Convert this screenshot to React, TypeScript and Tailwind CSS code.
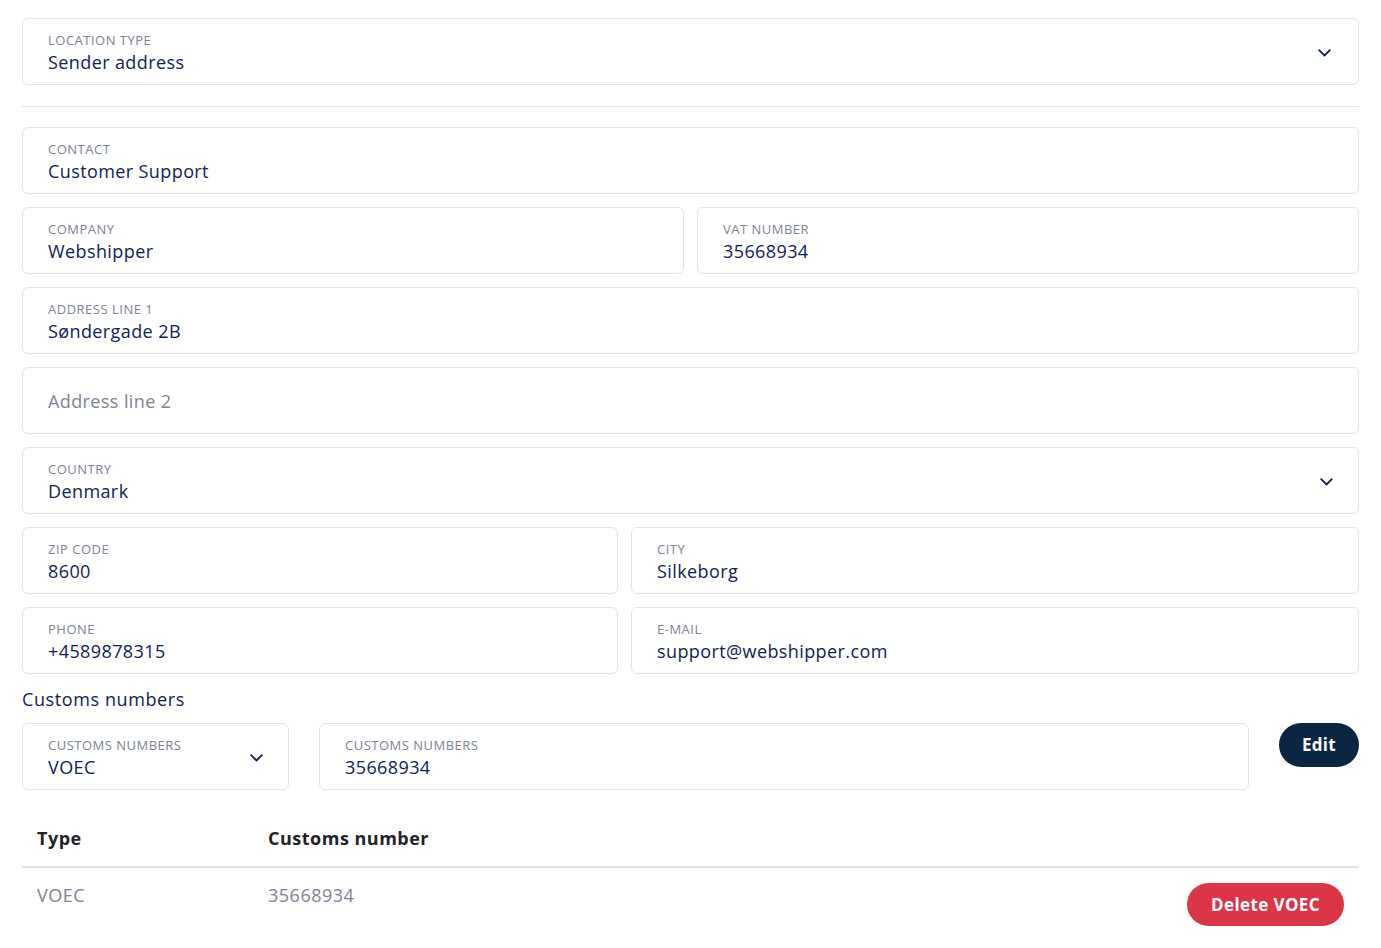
import React from "react";

const font = { fontFamily: '"Open Sans", "Noto Sans", sans-serif' };

function Chevron() {
  return (
    <svg width="13" height="8" viewBox="0 0 13 8" fill="none" className="shrink-0 mt-[3px]">
      <path d="M1.2 1.2 L6.5 6.5 L11.8 1.2" stroke="#0b2545" strokeWidth="1.8" strokeLinecap="round" strokeLinejoin="round" />
    </svg>
  );
}

function Field({ label, value, className = "", select = false, chevronPad = "pr-[26px]" }: { label: string; value: string; className?: string; select?: boolean; chevronPad?: string }) {
  return (
    <div className={`h-[67px] rounded-[6px] border border-[#e3e4e6] bg-white pl-[25px] flex items-center ${chevronPad} ${className}`}>
      <div className="flex-1 min-w-0 pt-[3px]">
        <div className="text-[13px] leading-[16px] uppercase text-[#7b8394] tracking-[0.5px]">{label}</div>
        <div className="text-[18px] leading-[24px] text-[#0e2158] mt-[2px] tracking-[0.4px]">{value}</div>
      </div>
      {select && <Chevron />}
    </div>
  );
}

export default function App() {
  return (
    <div style={font} className="bg-white min-h-[948px] w-[1381px] px-[22px] pt-[18px]">
      <Field label="Location type" value="Sender address" select chevronPad="pr-[27px]" />
      <div className="h-px bg-[#e3e4e6] mt-[21px] mb-[20px]" />
      <div className="flex flex-col gap-[13px]">
        <Field label="Contact" value="Customer Support" />
        <div className="flex gap-[13px]">
          <Field label="Company" value="Webshipper" className="flex-1" />
          <Field label="VAT number" value="35668934" className="flex-1" />
        </div>
        <Field label="Address line 1" value="Søndergade 2B" />
        <div className="h-[67px] rounded-[6px] border border-[#e3e4e6] bg-white pl-[25px] flex items-center">
          <span className="text-[18px] leading-[24px] text-[#7b8394] tracking-[0.4px]">Address line 2</span>
        </div>
        <Field label="Country" value="Denmark" select chevronPad="pr-[25px]" />
        <div className="flex gap-[13px]">
          <Field label="Zip code" value="8600" className="w-[596px]" />
          <Field label="City" value="Silkeborg" className="flex-1" />
        </div>
        <div className="flex gap-[13px]">
          <Field label="Phone" value="+4589878315" className="w-[596px]" />
          <Field label="E-mail" value="support@webshipper.com" className="flex-1" />
        </div>
      </div>
      <div className="text-[18px] leading-[24px] text-[#0e2158] mt-[13px] tracking-[0.6px]">Customs numbers</div>
      <div className="flex items-start mt-[12px]">
        <Field label="Customs numbers" value="VOEC" select className="w-[267px]" chevronPad="pr-[25px]" />
        <Field label="Customs numbers" value="35668934" className="flex-1 ml-[30px]" />
        <button className="ml-[30px] h-[44px] w-[80px] rounded-full bg-[#0b2545] text-white text-[17px] font-bold tracking-[0.3px]">Edit</button>
      </div>
      <div className="mt-[24px]">
        <div className="flex pt-[12px] pb-[16px] border-b-2 border-[#dfe2e6] text-[18px] leading-[24px] font-bold text-[#1f2229] tracking-[0.5px]">
          <div className="w-[246px] pl-[15px]">Type</div>
          <div>Customs number</div>
        </div>
        <div className="flex items-start pt-[15px] text-[18px] leading-[24px] text-[#7b8394] tracking-[0.5px]">
          <div className="w-[246px] pl-[15px]">VOEC</div>
          <div className="flex-1">35668934</div>
          <button className="mr-[15px] h-[43px] w-[157px] rounded-full bg-[#dc3545] text-white text-[17px] font-bold tracking-[0.4px]">Delete VOEC</button>
        </div>
      </div>
    </div>
  );
}
